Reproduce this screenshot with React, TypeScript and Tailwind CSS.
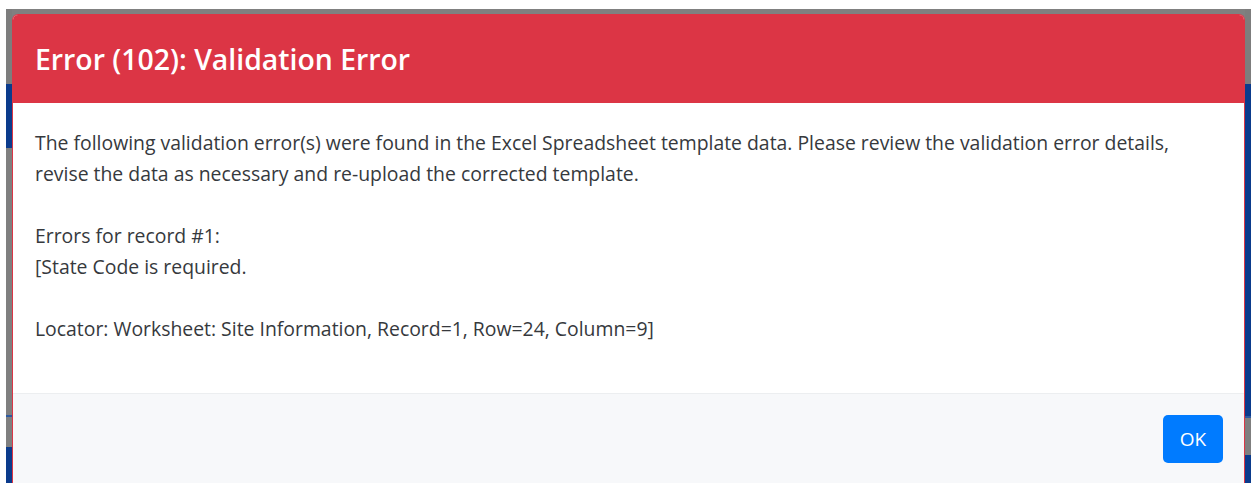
import { useState } from 'react';

// Strips of the page that show through the backdrop on either side of the dialog
const LeftStrip = () => (
  <div className="flex w-[6px] flex-col">
    <div className="h-[75px] bg-[#7d7d7d]" />
    <div className="h-[64px] bg-[#0b3b8c]" />
    <div className="h-[267px] bg-[#7f7f7f]" />
    <div className="h-[2px] bg-[#2d5aa0]" />
    <div className="h-[30px] bg-[#7f7f7f]" />
    <div className="flex-1 bg-[#0b3b8c]" />
  </div>
);

const RightStrip = () => (
  <div className="flex w-[6px] flex-col">
    <div className="h-[75px] bg-[#7d7d7d]" />
    <div className="h-[332px] bg-[#0b3b8c]" />
    <div className="h-[2px] bg-[#2d5aa0]" />
    <div className="h-[37px] bg-[#7f7f7f]" />
    <div className="flex-1 bg-[#0b3b8c]" />
  </div>
);

export default function App() {
  const [open, setOpen] = useState(true);

  return (
    <div className="h-[483px] w-[1251px] overflow-hidden bg-white pl-[6px] pt-[9px] font-['Open_Sans',sans-serif]">
      <div className="flex h-full bg-[#808080]">
        <LeftStrip />
        {open && (
          <div className="mt-[5px] flex flex-1 flex-col overflow-hidden rounded-t-[6px] border-x border-t border-[#dc3545] bg-white">
            <div className="flex h-[88px] shrink-0 items-center bg-[#dc3545] px-[22px]">
              <h2 className="text-[28.4px] font-semibold text-white">Error (102): Validation Error</h2>
            </div>
            <div className="h-[290px] shrink-0 whitespace-nowrap px-[22px] pt-[24px] text-[19.4px] leading-[31px] text-[#36393d]">
              The following validation error(s) were found in the Excel Spreadsheet template data. Please review the validation error details,
              <br />
              revise the data as necessary and re-upload the corrected template.
              <br />
              <br />
              Errors for record #1:
              <br />
              [State Code is required.
              <br />
              <br />
              Locator: Worksheet: Site Information, Record=1, Row=24, Column=9]
            </div>
            <div className="flex flex-1 justify-end border-t border-[#eceef0] bg-[#f7f8fa] pr-[21px] pt-[21px]">
              <button
                onClick={() => setOpen(false)}
                className="h-[48px] w-[60px] rounded-[5px] bg-[#007bff] text-[19px] text-white"
              >
                OK
              </button>
            </div>
          </div>
        )}
        <RightStrip />
      </div>
    </div>
  );
}
